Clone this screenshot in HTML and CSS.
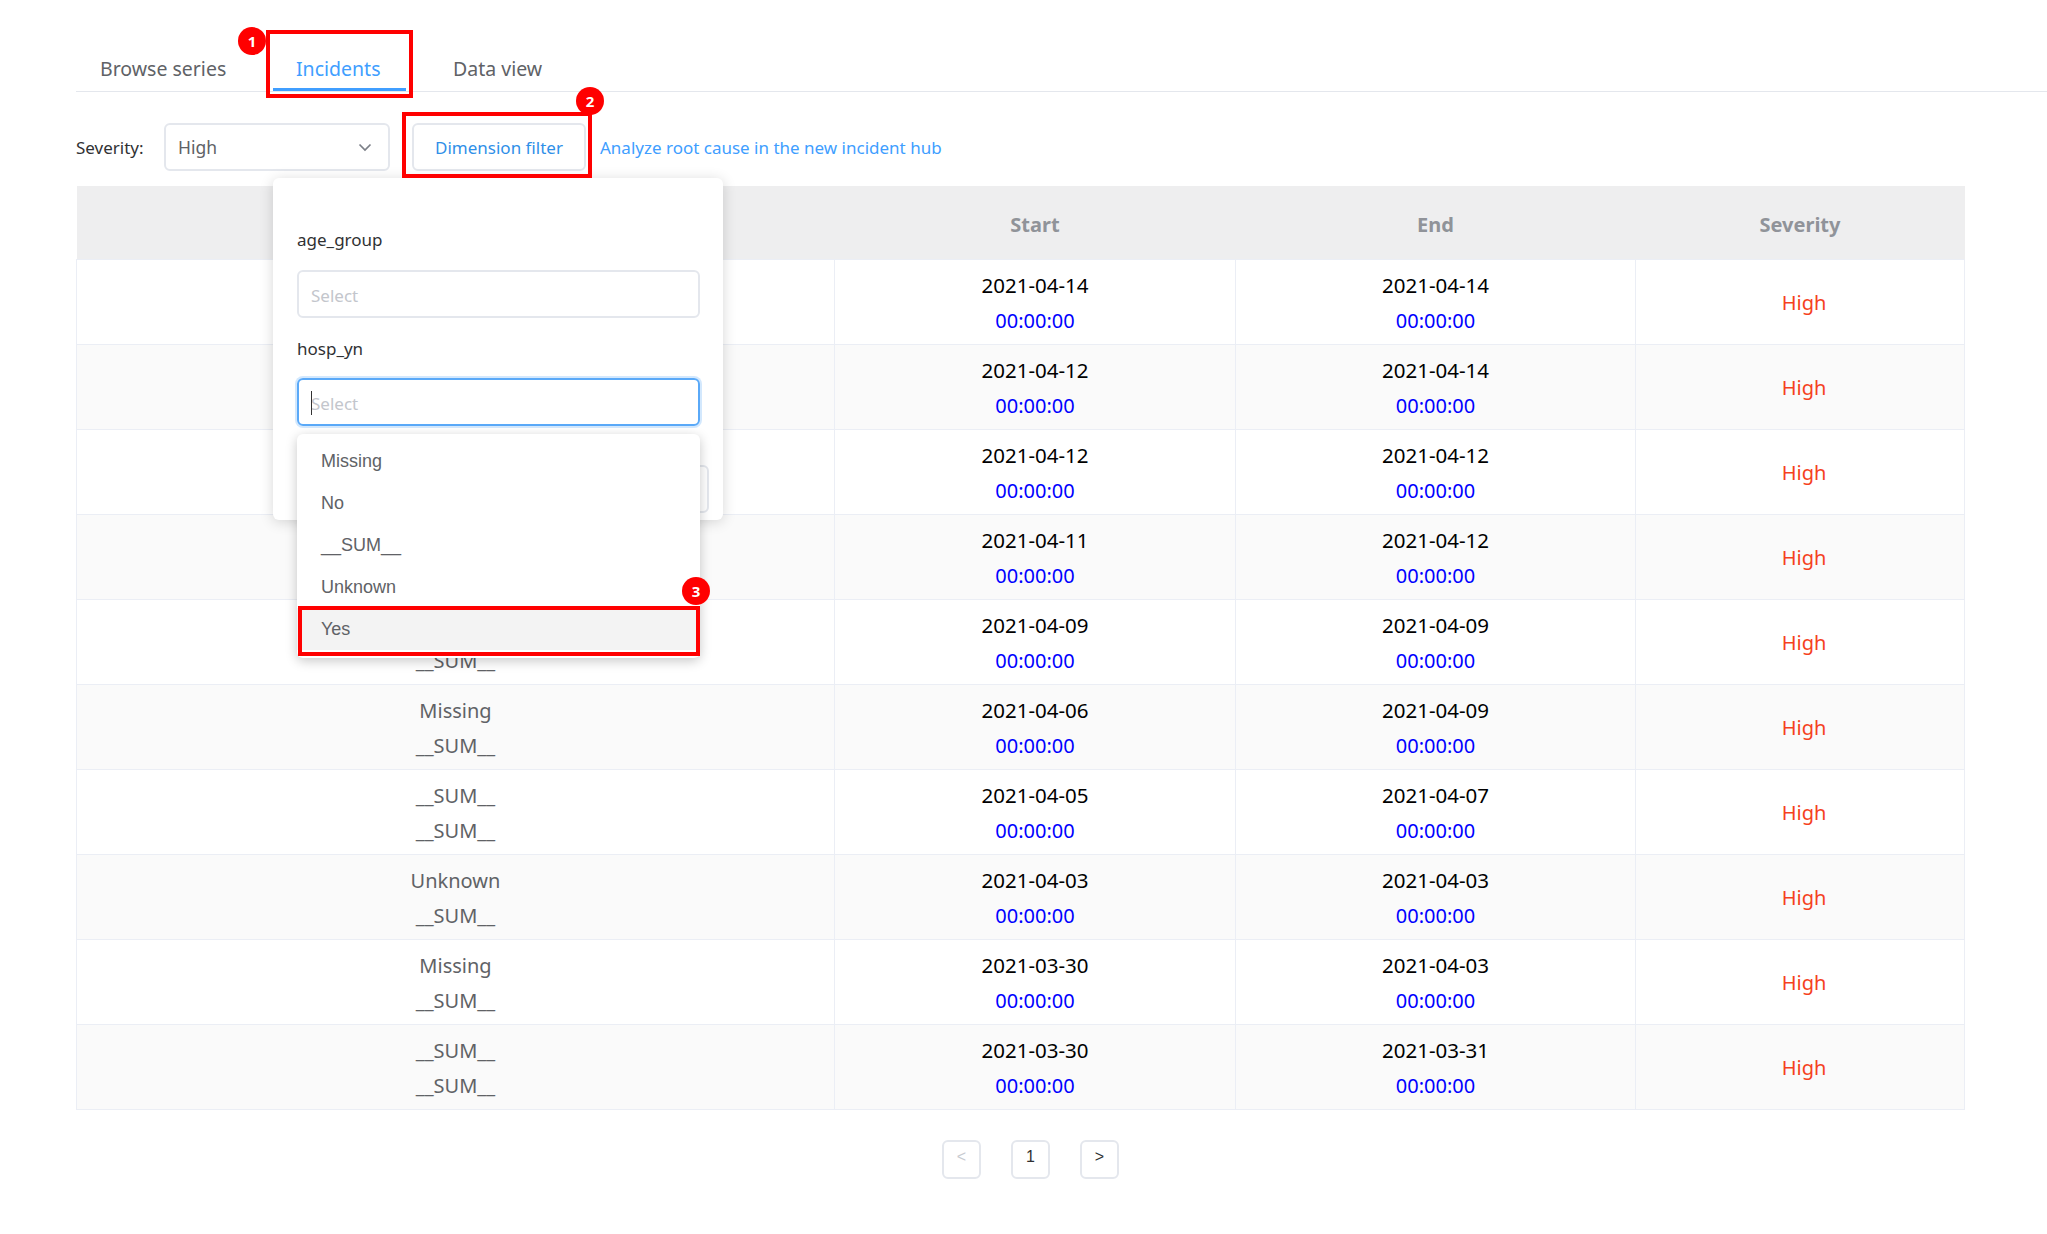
FILE: index.html
```html
<!DOCTYPE html>
<html lang="en">
<head>
<meta charset="utf-8">
<title>Incidents</title>
<link rel="stylesheet" href="styles.css">
</head>
<body>
<div class="page">
  <nav class="tabs">
    <a class="tab t1">Browse series</a>
    <a class="tab t2 active">Incidents</a>
    <a class="tab t3">Data view</a>
  </nav>
  <div class="toolbar">
    <span class="sev-label">Severity:</span>
    <div class="select">
      <span>High</span>
      <svg class="chev" width="14" height="9" viewBox="0 0 14 9"><path d="M1.500 1.500 7 7l5.500-5.500" fill="none" stroke="#7b7f87" stroke-width="1.700"/></svg>
    </div>
    <button class="btn">Dimension filter</button>
    <a class="link">Analyze root cause in the new incident hub</a>
  </div>
  <table class="grid">
    <colgroup><col class="c1"><col class="c2"><col class="c3"><col class="c4"></colgroup>
    <thead><tr><th></th><th>Start</th><th>End</th><th>Severity</th></tr></thead>
    <tbody>
      <tr><td class="dim"><div>&nbsp;</div><div>&nbsp;</div></td><td><div class="d">2021-04-14</div><div class="t">00:00:00</div></td><td><div class="d">2021-04-14</div><div class="t">00:00:00</div></td><td class="high">High</td></tr>
      <tr><td class="dim"><div>&nbsp;</div><div>&nbsp;</div></td><td><div class="d">2021-04-12</div><div class="t">00:00:00</div></td><td><div class="d">2021-04-14</div><div class="t">00:00:00</div></td><td class="high">High</td></tr>
      <tr><td class="dim"><div>&nbsp;</div><div>&nbsp;</div></td><td><div class="d">2021-04-12</div><div class="t">00:00:00</div></td><td><div class="d">2021-04-12</div><div class="t">00:00:00</div></td><td class="high">High</td></tr>
      <tr><td class="dim"><div>&nbsp;</div><div>&nbsp;</div></td><td><div class="d">2021-04-11</div><div class="t">00:00:00</div></td><td><div class="d">2021-04-12</div><div class="t">00:00:00</div></td><td class="high">High</td></tr>
      <tr><td class="dim"><div>&nbsp;</div><div>__SUM__</div></td><td><div class="d">2021-04-09</div><div class="t">00:00:00</div></td><td><div class="d">2021-04-09</div><div class="t">00:00:00</div></td><td class="high">High</td></tr>
      <tr><td class="dim"><div>Missing</div><div>__SUM__</div></td><td><div class="d">2021-04-06</div><div class="t">00:00:00</div></td><td><div class="d">2021-04-09</div><div class="t">00:00:00</div></td><td class="high">High</td></tr>
      <tr><td class="dim"><div>__SUM__</div><div>__SUM__</div></td><td><div class="d">2021-04-05</div><div class="t">00:00:00</div></td><td><div class="d">2021-04-07</div><div class="t">00:00:00</div></td><td class="high">High</td></tr>
      <tr><td class="dim"><div>Unknown</div><div>__SUM__</div></td><td><div class="d">2021-04-03</div><div class="t">00:00:00</div></td><td><div class="d">2021-04-03</div><div class="t">00:00:00</div></td><td class="high">High</td></tr>
      <tr><td class="dim"><div>Missing</div><div>__SUM__</div></td><td><div class="d">2021-03-30</div><div class="t">00:00:00</div></td><td><div class="d">2021-04-03</div><div class="t">00:00:00</div></td><td class="high">High</td></tr>
      <tr><td class="dim"><div>__SUM__</div><div>__SUM__</div></td><td><div class="d">2021-03-30</div><div class="t">00:00:00</div></td><td><div class="d">2021-03-31</div><div class="t">00:00:00</div></td><td class="high">High</td></tr>
    </tbody>
  </table>
  <div class="pager">
    <span class="pg off">&lt;</span>
    <span class="pg">1</span>
    <span class="pg">&gt;</span>
  </div>

  <div class="popover">
    <div class="f-label">age_group</div>
    <div class="input"><span class="ph">Select</span></div>
    <div class="f-label second">hosp_yn</div>
    <div class="input focus"><span class="caret"></span><span class="ph">Select</span></div>
    <div class="peek"></div>
  </div>
  <ul class="dropdown">
    <li>Missing</li>
    <li>No</li>
    <li>__SUM__</li>
    <li>Unknown</li>
    <li class="hover">Yes</li>
  </ul>

  <div class="mark m1"></div>
  <div class="mark m2"></div>
  <div class="mark m3"></div>
  <span class="badge b1">1</span>
  <span class="badge b2">2</span>
  <span class="badge b3">3</span>
</div>
</body>
</html>
```

FILE: styles.css
```css
* { box-sizing: border-box; }
html, body { margin: 0; padding: 0; background: #fff; }
body { font-family: "Noto Sans", "Open Sans", "Liberation Sans", sans-serif; color: #303133; }
.page { position: relative; width: 2047px; height: 1234px; overflow: hidden; padding: 40px 0 0 76px; }

.tabs { display: flex; height: 52px; border-bottom: 1px solid #e4e7ed; margin-right: -76px; font-size: 19.5px; color: #606266; }
.tab { height: 51px; line-height: 57px; }
.t1 { width: 197px; padding-left: 24px; }
.t2 { width: 133px; padding-left: 23px; }
.t3 { padding-left: 47px; }
.tab.active { color: #409eff; border-bottom: 3px solid #409eff; }

.toolbar { display: flex; align-items: center; margin-top: 31px; height: 48px; font-size: 17px; }
.sev-label { width: 88px; color: #303133; }
.select { width: 226px; height: 48px; border: 2px solid #e4e7ed; border-radius: 6px; display: flex; align-items: center; justify-content: space-between; padding: 0 16px 0 12px; color: #606266; font-size: 17.5px; }
.btn { margin-left: 22px; width: 174px; height: 48px; background: #fff; border: 2px solid #e4e7ed; border-radius: 6px; color: #2f8fe8; font: inherit; padding: 0; }
.link { margin-left: 14px; color: #409eff; }

.grid { margin-top: 15px; width: 1888px; border-collapse: collapse; table-layout: fixed; }
.c1 { width: 758px; } .c2 { width: 401px; } .c3 { width: 400px; } .c4 { width: 329px; }
.grid th { height: 73px; background: #eeeeef; color: #909399; font-size: 20px; font-weight: 700; text-align: center; padding: 5px 0 0; }
.grid td { height: 85px; padding: 2px 0 0; text-align: center; border: 1px solid #ebeef5; font-size: 20px; line-height: 35px; color: #000; }
.grid tbody tr:nth-child(even) td { background: #fafafa; }
.grid td.dim { color: #606266; }
.d { color: #000; font-size: 20.5px; }
.t { color: #0000ff; }
.grid td.high { color: #f5411e; padding-left: 8px; }

.pager { display: flex; gap: 30px; margin: 30px 0 0 866px; }
.pg { width: 39px; height: 39px; border: 2px solid #e4e7ed; border-radius: 6px; font-size: 16px; color: #303133; text-align: center; line-height: 29px; font-family: "Liberation Sans", sans-serif; }
.pg.off { color: #c8cbd1; }

.popover { position: absolute; left: 273px; top: 178px; width: 450px; height: 342px; background: #fff; border-radius: 6px; box-shadow: 0 2px 14px rgba(0,0,0,.16); padding: 48px 24px 0; font-size: 17px; color: #303133; }
.f-label { line-height: 28px; }
.f-label.second { margin-top: 17px; }
.input { width: 403px; height: 48px; margin-top: 16px; border: 2px solid #e4e7ed; border-radius: 6px; padding: 0 12px; display: flex; align-items: center; position: relative; }
.input.focus { border-color: #5aa9f8; box-shadow: 0 0 0 2px #d3e8fd; margin-top: 15px; }
.ph { color: #c3c6cc; padding-top: 2px; }
.caret { position: absolute; left: 12px; top: 11px; width: 1px; height: 24px; background: #333; }
.peek { position: absolute; right: 14px; top: 287px; width: 60px; height: 48px; border: 2px solid #e4e7ed; border-radius: 6px; }

.dropdown { position: absolute; left: 297px; top: 434px; width: 403px; height: 224px; margin: 0; padding: 6px 0; list-style: none; background: #fff; border-radius: 6px; box-shadow: 0 3px 12px rgba(0,0,0,.22); font: 18px/42px "Liberation Sans", sans-serif; color: #606266; }
.dropdown li { height: 42px; padding-left: 24px; }
.dropdown li.hover { background: #f3f3f3; }

.mark { position: absolute; border: 4px solid #ff0000; }
.m1 { left: 266px; top: 30px; width: 147px; height: 68px; }
.m2 { left: 402px; top: 112px; width: 190px; height: 66px; }
.m3 { left: 298px; top: 606px; width: 402px; height: 50px; }
.badge { position: absolute; width: 28px; height: 28px; border-radius: 50%; background: #ff0000; color: #fff; font: 700 15px/28px "Noto Sans", sans-serif; text-align: center; }
.b1 { left: 238px; top: 27px; }
.b2 { left: 576px; top: 87px; }
.b3 { left: 682px; top: 577px; }
```
